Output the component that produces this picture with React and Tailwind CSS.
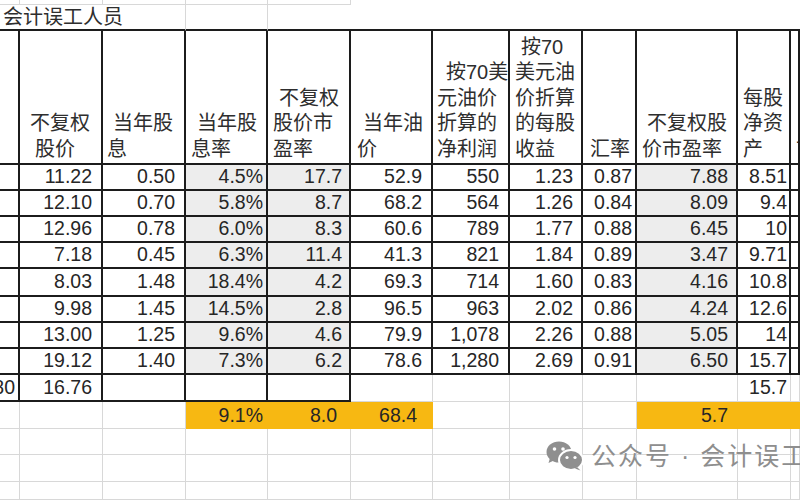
import React from 'react'

const font = { fontFamily: '"Liberation Sans", "Noto Sans CJK SC", sans-serif' }

const GRID = 'grid grid-cols-[20px_83px_83px_82px_83px_82px_77px_73px_54px_101px_53px_9px]'

const BOX = 'border-r-2 border-b-2 border-[#1c1c1c]'
const FAINT = 'border-r border-b border-[#d8d8d8]'

// right padding of the numbers, per column
const PR = ['pr-[3px]', 'pr-[9px]', 'pr-[9px]', 'pr-[3px]', 'pr-[7px]', 'pr-[9px]', 'pr-[9px]', 'pr-[8px]', 'pr-[3px]', 'pr-[8px]', 'pr-[2px]', 'pr-[2px]']
const SHADED = [3, 4, 9]

const headers = [
  [],
  [['不复权', 'pl-[10px]'], ['股价', 'pl-[15px]']],
  [['当年股', 'pl-[10px]'], ['息', 'pl-[4px]']],
  [['当年股', 'pl-[11px]'], ['息率', 'pl-[5px]']],
  [['不复权', 'pl-[11px]'], ['股价市', 'pl-[5px]'], ['盈率', 'pl-[5px]']],
  [['当年油', 'pl-[12px]'], ['价', 'pl-[6px]']],
  [['按70美', 'pl-[13px]'], ['元油价', 'pl-[4px]'], ['折算的', 'pl-[4px]'], ['净利润', 'pl-[4px]']],
  [['按70', 'pl-[11px]'], ['美元油', 'pl-[5px]'], ['价折算', 'pl-[5px]'], ['的每股', 'pl-[5px]'], ['收益', 'pl-[5px]']],
  [['汇率', 'pl-[7px]']],
  [['不复权股', 'pl-[10px]'], ['价市盈率', 'pl-[5px]']],
  [['每股', 'pl-[5px]'], ['净资', 'pl-[5px]'], ['产', 'pl-[5px]']],
  [['市', 'pl-[5px]']],
]

const data = [
  ['11.22', '0.50', '4.5%', '17.7', '52.9', '550', '1.23', '0.87', '7.88', '8.51'],
  ['12.10', '0.70', '5.8%', '8.7', '68.2', '564', '1.26', '0.84', '8.09', '9.4'],
  ['12.96', '0.78', '6.0%', '8.3', '60.6', '789', '1.77', '0.88', '6.45', '10'],
  ['7.18', '0.45', '6.3%', '11.4', '41.3', '821', '1.84', '0.89', '3.47', '9.71'],
  ['8.03', '1.48', '18.4%', '4.2', '69.3', '714', '1.60', '0.83', '4.16', '10.8'],
  ['9.98', '1.45', '14.5%', '2.8', '96.5', '963', '2.02', '0.86', '4.24', '12.6'],
  ['13.00', '1.25', '9.6%', '4.6', '79.9', '1,078', '2.26', '0.88', '5.05', '14'],
  ['19.12', '1.40', '7.3%', '6.2', '78.6', '1,280', '2.69', '0.91', '6.50', '15.7'],
]
const rowH = ['h-[26px]', 'h-[26px]', 'h-[26px]', 'h-[26px]', 'h-[28px]', 'h-[26px]', 'h-[26px]', 'h-[26px]']

const Num = ({ className = '', children }) => (
  <div className={`flex items-center justify-end overflow-hidden whitespace-nowrap text-[19.5px] leading-none text-[#262626] ${className}`}>
    {children}
  </div>
)

const WeChat = () => (
  <svg width="38" height="30" viewBox="0 0 38 30">
    <ellipse cx="13" cy="11" rx="12.5" ry="10.5" fill="#8f8f8f" />
    <path d="M4 17 L2.5 22 L9 19 Z" fill="#8f8f8f" />
    <circle cx="8.5" cy="8" r="1.8" fill="#fff" />
    <circle cx="17" cy="8" r="1.8" fill="#fff" />
    <ellipse cx="25" cy="19" rx="12" ry="10" fill="#8f8f8f" stroke="#fff" strokeWidth="2" />
    <path d="M31 26 L34.5 29.5 L29 27.5 Z" fill="#8f8f8f" />
    <circle cx="21" cy="16.5" r="1.6" fill="#fff" />
    <circle cx="29" cy="16.5" r="1.6" fill="#fff" />
  </svg>
)

export default function App() {
  return (
    <div className="relative w-[800px] h-[500px] overflow-hidden bg-white" style={font}>
      {/* partial row above */}
      <div className={`${GRID} h-[5px]`}>
        {[0, 1, 2, 3, 4].map((c) => (
          <div key={c} className={FAINT} />
        ))}
      </div>

      {/* title row */}
      <div className={`${GRID} h-[26px]`}>
        <div className="border-b-2 border-[#1c1c1c] flex items-center pl-[3px] whitespace-nowrap text-[20px] leading-none text-[#2e2e2e]">
          会计误工人员
        </div>
        <div className="border-b-2 border-[#1c1c1c]" />
        <div className="border-b-2 border-r border-r-[#d8d8d8] border-b-[#1c1c1c]" />
        <div className="border-b-2 border-r border-r-[#d8d8d8] border-b-[#1c1c1c]" />
        {[4, 5, 6, 7, 8, 9, 10, 11].map((c) => (
          <div key={c} className="border-b-2 border-[#1c1c1c]" />
        ))}
      </div>

      {/* header row */}
      <div className={`${GRID} h-[134px]`}>
        {headers.map((lines, c) => (
          <div key={c} className={`${BOX} flex flex-col justify-end pb-[1px] overflow-hidden text-[20px] leading-[25.5px] text-[#2e2e2e]`}>
            {lines.map(([t, pl], i) => (
              <div key={i} className={`${pl} whitespace-nowrap`}>
                {t}
              </div>
            ))}
          </div>
        ))}
      </div>

      {/* data rows */}
      {data.map((row, r) => (
        <div key={r} className={`${GRID} ${rowH[r]}`}>
          <div className={BOX} />
          {row.map((v, i) => (
            <Num key={i} className={`${BOX} ${PR[i + 1]} ${SHADED.includes(i + 1) ? 'bg-[#ededed]' : 'bg-white'}`}>
              {v}
            </Num>
          ))}
          <div className={BOX} />
        </div>
      ))}

      {/* ninth row */}
      <div className={`${GRID} h-[27px]`}>
        <Num className={`${BOX} pr-[3px]`}>1.80</Num>
        <Num className={`${BOX} pr-[9px]`}>16.76</Num>
        <div className={BOX} />
        <div className={BOX} />
        <div className={BOX} />
        <div className={FAINT} />
        <div className={FAINT} />
        <div className={FAINT} />
        <div className={FAINT} />
        <div className={FAINT} />
        <Num className={`${FAINT} pr-[3px]`}>15.7</Num>
        <div className={FAINT} />
      </div>

      {/* average row */}
      <div className={`${GRID} h-[27px]`}>
        <div className={FAINT} />
        <div className={FAINT} />
        <div className={FAINT} />
        <Num className="bg-[#f7b812] pr-[5px] text-[#3b3120]">9.1%</Num>
        <Num className="bg-[#f7b812] pr-[14px] text-[#3b3120]">8.0</Num>
        <Num className="bg-[#f7b812] pr-[16px] text-[#3b3120]">68.4</Num>
        <div className={FAINT} />
        <div className={FAINT} />
        <div className={FAINT} />
        <Num className="bg-[#f7b812] pr-[10px] text-[#3b3120]">5.7</Num>
        <div className="bg-[#f7b812]" />
        <div className="bg-[#f7b812]" />
      </div>

      {/* empty rows */}
      {['h-[26px]', 'h-[27px]', 'h-[18px]'].map((h, r) => (
        <div key={r} className={`${GRID} ${h}`}>
          {[0, 1, 2, 3, 4, 5, 6, 7, 8, 9, 10, 11].map((c) => (
            <div key={c} className={FAINT} />
          ))}
        </div>
      ))}

      {/* watermark */}
      <div className="absolute left-[546px] top-[441px] flex items-center gap-[7px] whitespace-nowrap">
        <WeChat />
        <span className="text-[25px] leading-none tracking-[2px] text-[#8e8e8e]">公众号 · 会计误工人员</span>
      </div>
    </div>
  )
}
